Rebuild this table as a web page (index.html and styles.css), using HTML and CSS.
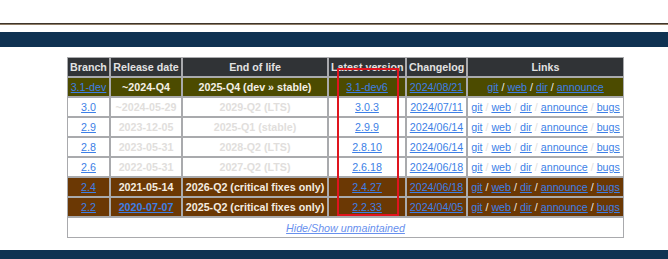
FILE: index.html
```html
<!DOCTYPE html>
<html>
<head>
<meta charset="utf-8">
<link rel="stylesheet" href="styles.css">
</head>
<body>
<div class="rule"></div>
<div class="bar"></div>
<div class="wrap">
<table class="branches">
<thead>
<tr><th class="c1">Branch</th><th class="c2">Release date</th><th class="c3">End of life</th><th class="c4">Latest version</th><th class="c5">Changelog</th><th class="c6">Links</th></tr>
</thead>
<tbody>
<tr class="dev"><td><a href="#">3.1-dev</a></td><td class="b">~2024-Q4</td><td class="b">2025-Q4 (dev » stable)</td><td><a href="#">3.1-dev6</a></td><td><a href="#">2024/08/21</a></td><td><a href="#">git</a> / <a href="#">web</a> / <a href="#">dir</a> / <a href="#">announce</a></td></tr>
<tr class="old"><td><a href="#">3.0</a></td><td class="b">~2024-05-29</td><td class="b">2029-Q2 (LTS)</td><td><a href="#">3.0.3</a></td><td><a href="#">2024/07/11</a></td><td><a href="#">git</a> / <a href="#">web</a> / <a href="#">dir</a> / <a href="#">announce</a> / <a href="#">bugs</a></td></tr>
<tr class="old"><td><a href="#">2.9</a></td><td class="b">2023-12-05</td><td class="b">2025-Q1 (stable)</td><td><a href="#">2.9.9</a></td><td><a href="#">2024/06/14</a></td><td><a href="#">git</a> / <a href="#">web</a> / <a href="#">dir</a> / <a href="#">announce</a> / <a href="#">bugs</a></td></tr>
<tr class="old"><td><a href="#">2.8</a></td><td class="b">2023-05-31</td><td class="b">2028-Q2 (LTS)</td><td><a href="#">2.8.10</a></td><td><a href="#">2024/06/14</a></td><td><a href="#">git</a> / <a href="#">web</a> / <a href="#">dir</a> / <a href="#">announce</a> / <a href="#">bugs</a></td></tr>
<tr class="old"><td><a href="#">2.6</a></td><td class="b">2022-05-31</td><td class="b">2027-Q2 (LTS)</td><td><a href="#">2.6.18</a></td><td><a href="#">2024/06/18</a></td><td><a href="#">git</a> / <a href="#">web</a> / <a href="#">dir</a> / <a href="#">announce</a> / <a href="#">bugs</a></td></tr>
<tr class="crit"><td><a href="#">2.4</a></td><td class="b">2021-05-14</td><td class="b">2026-Q2 (critical fixes only)</td><td><a href="#">2.4.27</a></td><td><a href="#">2024/06/18</a></td><td><a href="#">git</a> / <a href="#">web</a> / <a href="#">dir</a> / <a href="#">announce</a> / <a href="#">bugs</a></td></tr>
<tr class="crit"><td><a href="#">2.2</a></td><td class="b"><a href="#">2020-07-07</a></td><td class="b">2025-Q2 (critical fixes only)</td><td><a href="#">2.2.33</a></td><td><a href="#">2024/04/05</a></td><td><a href="#">git</a> / <a href="#">web</a> / <a href="#">dir</a> / <a href="#">announce</a> / <a href="#">bugs</a></td></tr>
<tr class="toggle"><td colspan="6"><a href="#">Hide/Show unmaintained</a></td></tr>
</tbody>
</table>
<div class="highlight"></div>
</div>
<div class="bar bottom"></div>
</body>
</html>
```
FILE: styles.css
```css
html, body {
  margin: 0;
  padding: 0;
  background: #ffffff;
  font-family: "Liberation Sans", Arial, sans-serif;
}
.rule {
  margin-top: 23px;
  height: 0;
  border-top: 1px solid #3e352b;
  border-bottom: 1px solid #8d7c66;
}
.bar {
  margin-top: 7px;
  height: 15px;
  background: #0f3252;
}
.bar.bottom {
  margin-top: 12px;
  height: 12px;
}
.wrap {
  position: relative;
  padding: 10px 0 0 67px;
}
.branches {
  width: 557px;
  table-layout: fixed;
  border-collapse: separate;
  border-spacing: 0;
  font-size: 10.7px;
}
.branches th, .branches td {
  box-sizing: border-box;
  border: 1px solid #a9aaad;
  padding: 1px 2px;
  line-height: 16px;
  text-align: center;
  white-space: nowrap;
  overflow: hidden;
}
.branches th {
  background: #303336;
  color: #e2e2e2;
  font-weight: bold;
}
.c1 { width: 43px; }
.c2 { width: 72px; }
.c3 { width: 146px; }
.c4 { width: 78px; }
.c5 { width: 61px; }
.c6 { width: 157px; }
.branches a {
  color: #3d7fe6;
  text-decoration: underline;
}
.b { font-weight: bold; }
.dev td {
  background: #4c4b00;
  color: #f4f0e6;
}
.old td {
  background: #ffffff;
  color: #e1dedc;
}
.crit td {
  background: #6b3804;
  color: #f4ece0;
}
.toggle td {
  background: #ffffff;
  padding-top: 2px;
}
.toggle a {
  font-style: italic;
}
.branches .toggle a {
  color: #6890ee;
}
.highlight {
  position: absolute;
  left: 337px;
  top: 21px;
  width: 58px;
  height: 144px;
  border: 2px solid #e0141e;
}
```
